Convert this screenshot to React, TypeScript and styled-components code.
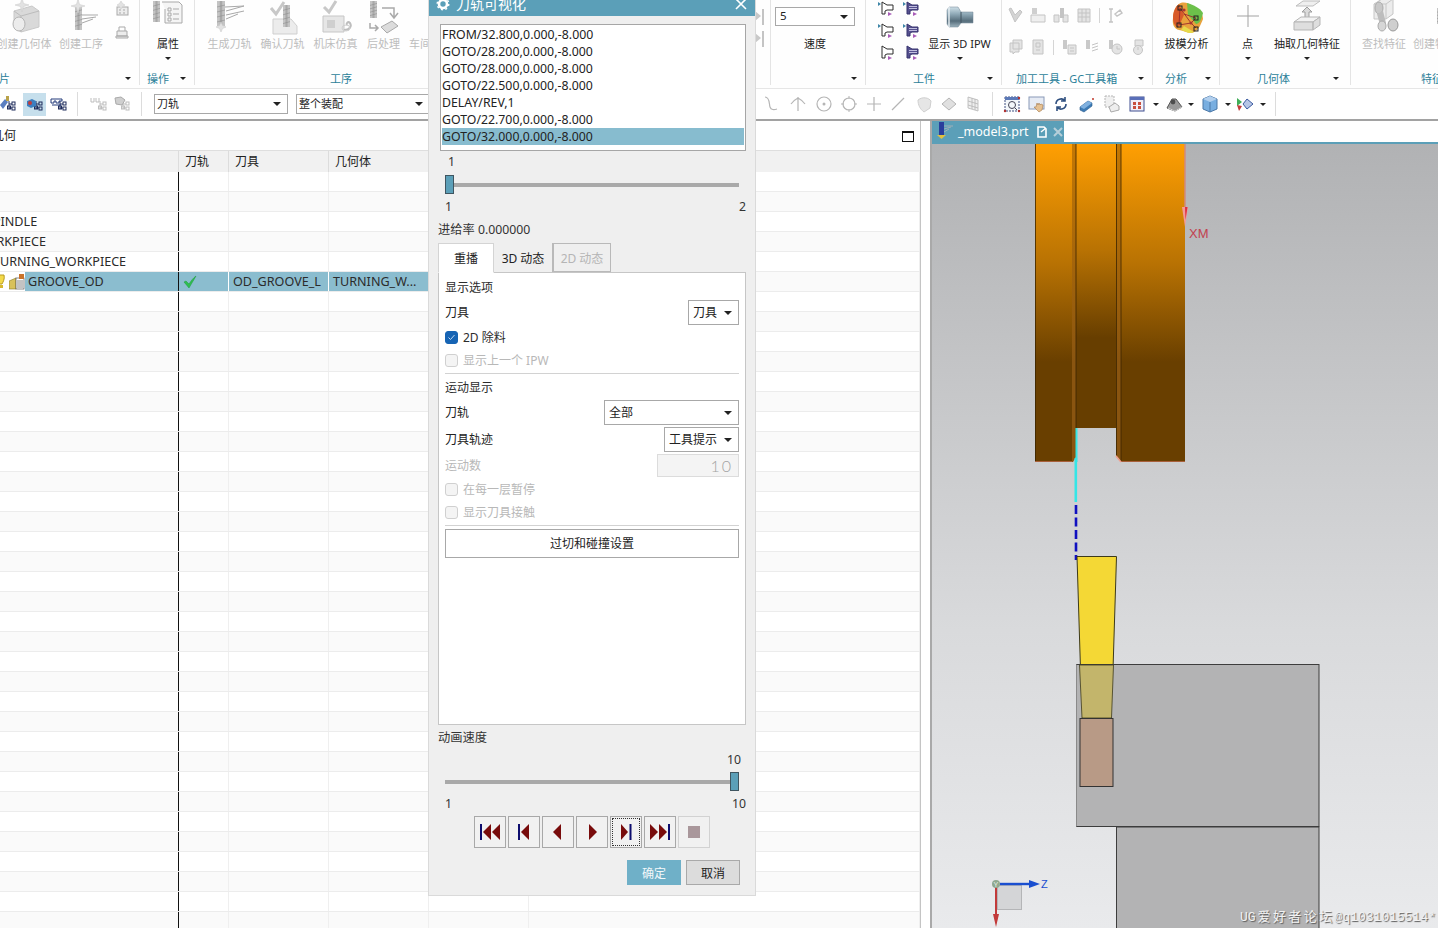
import React from "react";
import styled, { createGlobalStyle } from "styled-components";

const FONT = `"Noto Sans", "Open Sans", "Noto Sans CJK SC", sans-serif`;

const Global = createGlobalStyle`
  html, body { margin: 0; padding: 0; overflow: hidden; background: #fff; }
  * { box-sizing: border-box; }
`;

const Shell = styled.div`
  width: 1438px; height: 928px; position: relative; overflow: hidden;
  display: flex; flex-direction: column; background: #fff;
  font-family: ${FONT}; font-size: 12px; color: #222;
`;

/* ribbon */
const Ribbon = styled.div`
  height: 89px; display: flex; flex: none; background: #fefefe; border-bottom: 1px solid #e6e6e6;
`;
const Group = styled.div<{ $w: number }>`
  width: ${p => p.$w}px; flex: none; height: 85px; display: flex; flex-direction: column;
  border-right: 1px solid #e4e4e4;
`;
const Tools = styled.div<{ $pl?: number }>`
  height: 72px; display: flex; padding-left: ${p => p.$pl ?? 0}px;
`;
const Tool = styled.div<{ $w: number }>`
  width: ${p => p.$w}px; flex: none; display: flex; flex-direction: column; align-items: center;
`;
const Slot = styled.div`
  height: 35px; display: flex; align-items: flex-start; justify-content: center; width: 100%;
`;
const ToolLabel = styled.div<{ $off?: boolean; $bare?: boolean }>`
  height: 18px; line-height: 18px; font-size: 11px; white-space: nowrap;
  margin-top: ${p => (p.$bare ? 35 : 0)}px;
  color: ${p => (p.$off ? "#bdbdbd" : "#222")};
`;
const Caret = styled.span<{ $mt?: number; $ml?: string; $big?: boolean }>`
  display: block; width: 0; height: 0; flex: none;
  border-left: ${p => (p.$big ? 4 : 3)}px solid transparent; border-right: ${p => (p.$big ? 4 : 3)}px solid transparent;
  border-top: ${p => (p.$big ? 4 : 3)}px solid #222;
  margin-top: ${p => p.$mt ?? 0}px; margin-left: ${p => p.$ml ?? "0"};
`;
const Footer = styled.div<{ $pl: number; $pr?: number }>`
  height: 14px; display: flex; align-items: center;
  padding-left: ${p => p.$pl}px; padding-right: ${p => p.$pr ?? 8}px;
  font-size: 11px; color: #2b7f99; white-space: nowrap;
`;
const ClippedLabel = styled.span`
  margin-left: -1px;
`;
const Stack = styled.div<{ $w: number; $gap: number; $pt: number }>`
  width: ${p => p.$w}px; flex: none; display: flex; flex-direction: column; align-items: center;
  gap: ${p => p.$gap}px; padding-top: ${p => p.$pt}px;
`;
const Rows = styled.div<{ $pl: number }>`
  display: flex; flex-direction: column; gap: 16px; padding: 7px 0 0 ${p => p.$pl}px; height: 72px;
`;
const IconRow = styled.div`
  display: flex; align-items: center; gap: 7px; height: 16px;
`;
const VSep = styled.span`
  width: 1px; height: 15px; background: #d5d5d5; flex: none;
`;
const Push = styled.div`
  margin-left: auto;
`;
const Nudge = styled.span<{ $t: number }>`
  display: block; margin-top: ${p => p.$t}px;
`;

/* second toolbar */
const Toolbar = styled.div`
  height: 32px; flex: none; display: flex; align-items: center; border-bottom: 2px solid #a2a2a2; background: #fff;
`;
const TbSection = styled.div<{ $w: number }>`
  width: ${p => p.$w}px; flex: none; display: flex; align-items: center; height: 100%;
`;
const TbBtn = styled.div<{ $w: number; $ml?: number; $active?: boolean }>`
  width: ${p => p.$w}px; height: 23px; flex: none; margin-left: ${p => p.$ml ?? 0}px;
  display: flex; align-items: center; justify-content: center;
  background: ${p => (p.$active ? "#c6dfec" : "transparent")};
`;
const TbSep = styled.span<{ $ml: number }>`
  width: 1px; height: 24px; background: #dcdcdc; flex: none; margin-left: ${p => p.$ml}px;
`;
const Combo = styled.div<{ $w: number; $h?: number; $ml?: number; $mt?: number; $fs?: number; $pl?: number }>`
  width: ${p => p.$w}px; height: ${p => p.$h ?? 25}px; flex: none;
  margin-left: ${p => p.$ml ?? 0}px; margin-top: ${p => p.$mt ?? 0}px;
  border: 1px solid #a8a8a8; background: #fff; display: flex; align-items: center;
  padding: 0 6px 2px ${p => p.$pl ?? 4}px; font-size: ${p => p.$fs ?? 12}px; color: #222;
  justify-content: space-between; white-space: nowrap;
  span { margin-top: 2px; }
`;

/* main */
const Main = styled.div`
  flex: 1; display: flex; min-height: 0;
`;
const Nav = styled.div`
  width: 921px; flex: none; border-right: 1px solid #c4c4c4; display: flex; flex-direction: column; overflow: hidden;
`;
const NavTitle = styled.div`
  height: 29px; flex: none; display: flex; align-items: center; justify-content: space-between;
  padding-right: 6px; font-size: 12px;
`;
const NavTitleText = styled.span`
  margin-left: -8px; margin-top: -2px;
`;
const MaxBtn = styled.div`
  width: 12px; height: 11px; border: 1px solid #111; border-top-width: 2px; margin-top: 1px;
`;
const HeadRow = styled.div`
  height: 22px; flex: none; display: flex; background: #f1f1f1; border-top: 1px solid #dedede;
`;
const HeadCell = styled.div<{ $w: number }>`
  width: ${p => p.$w}px; flex: none; padding-left: 6px; border-right: 1px solid #dcdcdc;
  line-height: 21px; font-size: 12px;
`;
const Row = styled.div<{ $alt: boolean }>`
  height: 20px; flex: none; display: flex; background: ${p => (p.$alt ? "#fafafa" : "#fff")};
  border-bottom: 1px solid #ececec;
`;
const Cell = styled.div<{ $w?: number; $sel?: boolean }>`
  width: ${p => (p.$w ? p.$w + "px" : "auto")}; flex: ${p => (p.$w ? "none" : "1")};
  border-right: 1px solid ${p => (p.$sel ? "#fff" : "#efefef")};
  background: ${p => (p.$sel ? "#8bbdcf" : "transparent")};
  padding-left: 4px; line-height: 19px; font-size: 12.6px; white-space: nowrap; overflow: hidden; color: #2b2b2b;
  display: flex; align-items: center;
`;
const NameCell = styled.div`
  width: 179px; flex: none; border-right: 1px solid #111; display: flex; align-items: center;
  white-space: nowrap; overflow: hidden; line-height: 19px; font-size: 12.6px; color: #2b2b2b;
`;
const NameText = styled.span<{ $off: number }>`
  margin-left: ${p => p.$off}px;
`;
const SelLead = styled.div`
  width: 25px; height: 100%; flex: none; background: #fff; display: flex; align-items: center; gap: 1px;
`;
const SelName = styled.div`
  flex: 1; height: 100%; background: #8bbdcf; padding-left: 3px;
`;

const Gutter = styled.div`
  width: 9px; flex: none; background: #fff;
`;
const View = styled.div`
  flex: 1; min-width: 0; display: flex; flex-direction: column; position: relative; border-left: 2px solid #a9a9a9;
`;
const TabStrip = styled.div`
  height: 23px; flex: none; background: #fff; border-bottom: 2px solid #5b9fb8; display: flex;
`;
const FileTab = styled.div`
  width: 132px; height: 21px; background: #5b9fb8; color: #fff; display: flex; align-items: center;
  padding-left: 3px; font-size: 12.5px;
`;
const FileName = styled.span`
  margin: 0 7px 0 4px;
`;
const FileClose = styled.span`
  margin-left: 5px; display: block;
`;
const Scene = styled.svg`
  display: block; flex: 1; width: 100%; min-height: 0;
  background: linear-gradient(#b1b2b4 0%, #c8c9cb 35%, #d9dadc 62%, #e9eaec 100%);
`;
const Watermark = styled.div`
  position: absolute; right: 2px; bottom: 3px; color: #f2f2f2; font-family: "Liberation Mono", "Noto Sans CJK SC", monospace;
  font-size: 13px; text-shadow: 1px 1px 1px #5a5a5a; white-space: nowrap;
`;
const WaterCjk = styled.span`
  letter-spacing: 2.4px; margin-left: 2px;
`;

/* dialog */
const Dialog = styled.div`
  position: absolute; left: 428px; top: -8px; width: 328px; height: 904px; background: #efefef;
  border: 1px solid #dadada; border-top: 0; display: flex; flex-direction: column;
`;
const DTitle = styled.div`
  height: 24px; flex: none; background: #5b9fb8; color: #fff; display: flex; align-items: center;
  padding: 0 8px 0 7px; gap: 6px; font-size: 14px;
`;
const DTitleText = styled.span`
  flex: 1; margin-top: -2px;
`;
const DBody = styled.div`
  flex: 1; padding: 8px 9px 0 9px; display: flex; flex-direction: column;
`;
const ListBox = styled.div`
  margin-left: 2px; width: 306px; height: 127px; flex: none; background: #fff; border: 1px solid #a6a6a6;
  padding: 1px; font-size: 12.3px;
`;
const ListItem = styled.div<{ $sel?: boolean }>`
  height: 17px; line-height: 17px; background: ${p => (p.$sel ? "#87bccf" : "transparent")}; color: #222;
`;
const Num = styled.div<{ $mt: number; $ml?: number; $w?: number; $right?: boolean }>`
  height: 14px; line-height: 14px; font-size: 12.25px; flex: none; color: #333;
  margin-top: ${p => p.$mt}px; margin-left: ${p => p.$ml ?? 0}px;
  ${p => (p.$w ? `width: ${p.$w}px;` : "")}
  ${p => (p.$right ? "text-align: right;" : "")}
`;
const Slider = styled.div<{ $mt: number }>`
  position: relative; margin: ${p => p.$mt}px 0 0 7px; width: 294px; height: 20px; flex: none; display: flex; align-items: center;
`;
const Track = styled.div`
  width: 100%; height: 4px; background: #a9a9a9;
`;
const Thumb = styled.div<{ $end?: boolean }>`
  position: absolute; top: 0; ${p => (p.$end ? "right: 0;" : "left: 0;")} width: 9px; height: 19px;
  background: #5b9fb8; border: 1px solid #3f5560;
`;
const EndRow = styled.div<{ $mt: number }>`
  margin: ${p => p.$mt}px 0 0 7px; width: 301px; height: 14px; line-height: 14px; display: flex; justify-content: space-between; flex: none; color: #333; font-size: 12.25px;
`;
const Tabs = styled.div`
  margin-top: 6px; height: 30px; display: flex; flex: none; position: relative; z-index: 1; margin-bottom: -1px;
`;
const Tab = styled.div<{ $w: number; $on?: boolean; $off?: boolean }>`
  width: ${p => p.$w}px; display: flex; align-items: center; justify-content: center; font-size: 12px;
  height: ${p => (p.$on ? 30 : 29)}px;
  background: ${p => (p.$on ? "#fff" : "#efefef")};
  color: ${p => (p.$off ? "#b5b5b5" : "#222")};
  border: 1px solid ${p => (p.$on ? "#d4d4d4" : p.$off ? "#b9b9b9" : "transparent")};
  ${p => (p.$on ? "border-bottom-color: #fff;" : "")}
  ${p => (p.$off ? "border-width: 1px 1px 1px 2px;" : "")}
`;
const Panel = styled.div`
  height: 453px; flex: none; width: 308px; background: #fff; border: 1px solid #c6c6c6;
  padding: 6px 6px 0 6px; display: flex; flex-direction: column;
`;
const Sect = styled.div<{ $mt?: number }>`
  height: 18px; line-height: 18px; font-size: 12px; flex: none; color: #2c2c2c; margin-top: ${p => p.$mt ?? 0}px;
`;
const FieldRow = styled.div<{ $mt: number }>`
  display: flex; justify-content: space-between; align-items: center; flex: none; margin-top: ${p => p.$mt}px; font-size: 12px;
`;
const FieldLabel = styled.span<{ $off?: boolean }>`
  color: ${p => (p.$off ? "#b8b8b8" : "#222")}; margin-top: -2px;
`;
const CountBox = styled.div`
  width: 82px; height: 23px; border: 1px solid #dcdcdc; background: #f4f4f4; color: #a3a3a3; text-align: right;
  padding-right: 5px; font-family: Lato, "Liberation Sans", sans-serif; font-weight: 300; font-size: 16px; line-height: 22px; letter-spacing: 2px;
`;
const CheckRow = styled.div<{ $mt: number; $off?: boolean }>`
  height: 18px; display: flex; align-items: center; gap: 5px; flex: none; margin-top: ${p => p.$mt}px;
  color: ${p => (p.$off ? "#b8b8b8" : "#2c2c2c")}; font-size: 12px;
`;
const Check = styled.span<{ $on?: boolean }>`
  width: 13px; height: 13px; border-radius: 3px; flex: none; display: flex; align-items: center; justify-content: center;
  background: ${p => (p.$on ? "#1664b4" : "#f4f4f4")}; border: 1px solid ${p => (p.$on ? "#1664b4" : "#d0d0d0")};
`;
const Hr = styled.div<{ $mt: number }>`
  height: 1px; background: #d2d2d2; flex: none; margin-top: ${p => p.$mt}px;
`;
const WideBtn = styled.div`
  height: 29px; margin-top: 3px; border: 1px solid #a8a8a8; display: flex; align-items: center; justify-content: center;
  font-size: 12px; flex: none; background: #fff; color: #222; padding-bottom: 2px;
`;
const Transport = styled.div`
  margin: 5px 0 0 36px; display: flex; gap: 2px; flex: none;
`;
const TBtn = styled.div<{ $off?: boolean; $focus?: boolean }>`
  width: 32px; height: 32px; border: 1px solid ${p => (p.$off ? "#d2d2d2" : "#a8a8a8")}; background: #f1f1f1;
  display: flex; align-items: center; justify-content: center;
  ${p => (p.$focus ? "outline: 1px dotted #333; outline-offset: -3px;" : "")}
`;
const DFooter = styled.div`
  margin: 12px 0 0 189px; display: flex; gap: 5px; flex: none;
`;
const DBtn = styled.div<{ $primary?: boolean }>`
  width: 54px; height: 25px; display: flex; align-items: center; justify-content: center; font-size: 12px;
  background: ${p => (p.$primary ? "#6fb0c8" : "#dcdcdc")}; color: ${p => (p.$primary ? "#f3f8fa" : "#222")};
  border: 1px solid ${p => (p.$primary ? "#6fb0c8" : "#a9a9a9")};
`;

/* ---------- icons ---------- */
const G = { a: "#d9d9d9", b: "#c4c4c4", c: "#a9a9a9", d: "#ececec", e: "#8f8f8f" };
const Ico: React.FC<{ s?: number; h?: number; vb?: string; children: React.ReactNode }> = ({ s = 36, h, vb, children }) => (
  <svg width={s} height={h ?? s} viewBox={vb ?? `0 0 ${s} ${h ?? s}`} style={{ display: "block", flex: "none" }}>{children}</svg>
);
const Burst = ({ x, y, r = 6 }: { x: number; y: number; r?: number }) => (
  <path d={`M${x} ${y - r}L${x + 1.5} ${y - 1.5}L${x + r} ${y}L${x + 1.5} ${y + 1.5}L${x} ${y + r}L${x - 1.5} ${y + 1.5}L${x - r} ${y}L${x - 1.5} ${y - 1.5}Z`} fill="#e2e2e2" stroke="#cfcfcf" strokeWidth=".6" />
);
const Mill = ({ x, y, w = 8, h = 26 }: { x: number; y: number; w?: number; h?: number }) => (
  <g>
    <rect x={x} y={y} width={w} height={h} fill={G.b} />
    <rect x={x + w * 0.35} y={y} width={w * 0.3} height={h} fill={G.c} />
    {[0.2, 0.4, 0.6, 0.8].map(t => <line key={t} x1={x} x2={x + w} y1={y + h * t + 1} y2={y + h * t - 1} stroke={G.e} strokeWidth=".6" />)}
  </g>
);
const CreateGeom = () => (
  <Ico>
    <path d="M8 11L26 6L33 11V27L15 32L8 27Z" fill={G.a} stroke="#c9c9c9" />
    <path d="M8 11L15 16L33 11M15 16V32" fill="none" stroke="#bcbcbc" />
    <ellipse cx="13" cy="24" rx="6" ry="7" fill={G.d} stroke="#b4b4b4" />
    <Burst x={16} y={5} r={7} />
  </Ico>
);
const CreateOp = () => (
  <Ico>
    <Mill x={12} y={6} w={7} h={24} />
    <path d="M19 15H35M19 19L33 17M19 23L30 19" stroke={G.c} fill="none" strokeWidth="1" />
    <Burst x={15} y={6} r={7} />
  </Ico>
);
const SmallA = () => (
  <Ico s={16}>
    <rect x="3" y="6" width="11" height="8" fill={G.d} stroke={G.c} />
    <path d="M5 9h2M9 9h2M5 12h2M9 12h2" stroke={G.c} />
    <Burst x={7} y={4} r={4} />
  </Ico>
);
const SmallB = () => (
  <Ico s={16}>
    <path d="M2 13h12v2H2zM3 8h10v5H3z" fill={G.d} stroke={G.c} />
    <path d="M5 8V4h6v4" fill="none" stroke={G.c} />
  </Ico>
);
const Props = () => (
  <Ico s={32} h={24} vb="0 0 32 24">
    <Mill x={1} y={1} w={7} h={21} />
    <path d="M10 2h17l3 3v18H13V9" fill="#f5f5f5" stroke={G.c} />
    <path d="M16 8h3v3h-3zM16 13h3v3h-3zM16 18h3v3h-3zM21 9h6M21 14h6M21 19h6" fill="none" stroke={G.c} />
  </Ico>
);
const GenPath = () => (
  <Ico>
    <Mill x={5} y={1} w={8} h={25} />
    <path d="M13 7L32 6L14 11M32 11L14 15M14 19L26 14" stroke={G.c} fill="none" />
    <Burst x={9} y={27} r={5} />
  </Ico>
);
const Verify = () => (
  <Ico>
    <path d="M8 19L26 19L32 26V34H8Z" fill={G.d} stroke="#cfcfcf" />
    <Mill x={18} y={5} w={7} h={22} />
    <path d="M6 8L11 14L19 2" fill="none" stroke="#c8c8c8" strokeWidth="3" />
  </Ico>
);
const Machine = () => (
  <Ico>
    <path d="M5 16H26V32H5Z" fill="#e6e6e6" stroke="#c6c6c6" />
    <rect x="9" y="20" width="8" height="8" fill="#cfcfcf" />
    <path d="M26 30C32 30 34 26 32 23C30 21 28 23 29 25" fill="none" stroke="#bdbdbd" strokeWidth="2" />
    <path d="M6 7L11 12L18 1" fill="none" stroke="#c8c8c8" strokeWidth="3" />
    <path d="M24 28a4 3 0 1 0 8 0a4 3 0 1 0 -8 0" fill="none" stroke="#cfcfcf" />
  </Ico>
);
const Post = () => (
  <Ico>
    <Mill x={4} y={1} w={7} h={17} />
    <path d="M16 8h12v9M24 13l4 5l4-5" fill="none" stroke={G.c} strokeWidth="1.5" />
    <path d="M4 23v5h8M9 25l3 3l-3 3" fill="none" stroke={G.c} strokeWidth="1.5" />
    <path d="M15 27l11-6l6 5l-11 7z" fill="#dcdcdc" stroke={G.c} />
  </Ico>
);
const StripIcon = () => (
  <Ico s={16} h={18} vb="0 0 16 18">
    <path d="M3 3l6 5l-6 5z" fill="#c9c9c9" />
    <path d="M11 1v16" stroke="#c4c4c4" strokeWidth="2" />
  </Ico>
);
const Tip = ({ tone, flag = true }: { tone: "w" | "v"; flag?: boolean }) => (
  <Ico s={17} h={16} vb="0 0 17 16">
    {flag && <path d="M0 2l3 2l-3 2z" fill="#3f86a8" />}
    <path d="M4 2L9 5H15V10H9L7 11V14H4Z" fill={tone === "w" ? "#fff" : "#55508e"} stroke={tone === "w" ? "#2d2d2d" : "#37336e"} />
    {tone === "v" && <path d="M6 6.5h8M6 8.5h8" stroke="#dcd9f2" strokeWidth=".8" />}
    <path d="M10 12v4l4-2z" fill="#a95cb8" />
  </Ico>
);
const Ipw = () => (
  <Ico s={28} h={22} vb="0 0 28 22">
    <defs>
      <linearGradient id="ipwg" x1="0" y1="0" x2="0" y2="1">
        <stop offset="0" stopColor="#cfe0e8" /><stop offset=".35" stopColor="#8fa9b7" /><stop offset=".7" stopColor="#566d7b" /><stop offset="1" stopColor="#9db3be" />
      </linearGradient>
    </defs>
    <path d="M3 1h9l3 5h12v11H15l-3 4H3l-2-3V4z" fill="url(#ipwg)" stroke="#6c8290" strokeWidth=".5" />
    <path d="M3 1v20" stroke="#e8f0f4" strokeWidth="2" opacity=".7" />
    <path d="M15 6v11" stroke="#41535f" strokeWidth="1" />
  </Ico>
);
const Draft = () => (
  <Ico s={34} h={40} vb="0 0 34 40">
    <path d="M9 4C13 1 19 3 22 6C28 9 33 13 33 19C31 24 29 30 24 32C20 35 13 30 9 30C4 29 2 24 3 18C3 12 5 7 9 4Z" fill="#e8a23c" />
    <path d="M17 3C24 5 30 8 33 13C31 22 28 24 26 24L18 15Z" fill="#6cc04a" />
    <path d="M3 18C3 12 5 7 9 4L14 15L8 28C5 26 3 23 3 18Z" fill="#d85a2a" />
    <path d="M14 26L24 32C20 35 15 31 11 30Z" fill="#e6da4a" />
    <path d="M10 8L9 25L21 23M10 8L21 23M14 14L26 18M21 23L26 28M21 23L26 18" stroke="#9c2b2b" strokeWidth=".9" fill="none" />
    {[[10, 8], [9, 25], [26, 18], [26, 29]].map(([x, y]) => (
      <rect key={`${x}${y}`} x={x - 2} y={y - 2} width="4" height="4" fill="none" stroke="#222" strokeWidth="1" />
    ))}
    <circle cx="14" cy="10" r="1.6" fill="#a33" />
    <circle cx="21" cy="23" r="1.6" fill="#a33" />
  </Ico>
);
const Plus = () => (
  <Ico s={24}>
    <path d="M12 1V23M1 12H23" stroke="#a2a2a2" strokeWidth="1" />
  </Ico>
);
const Extract = () => (
  <Ico s={28} h={35} vb="0 0 28 35">
    <path d="M3 6L10 1H27L20 6Z" fill="#efefef" stroke="#bdbdbd" />
    <path d="M12 17V12H9l5-5l5 5h-3v5" fill="#dadada" stroke="#9d9d9d" />
    <path d="M1 22L8 17H27L20 22Z" fill="#f2f2f2" stroke="#b5b5b5" />
    <path d="M1 22H20V30H1ZM20 22L27 17V25L20 30Z" fill="#dedede" stroke="#b5b5b5" />
  </Ico>
);
const FindFeat = () => (
  <Ico s={36}>
    <path d="M8 4L16 -1H27V14L20 19H8Z" fill="#ececec" stroke="#c6c6c6" />
    <path d="M8 4H20V19M20 4L27 -1" fill="none" stroke="#c6c6c6" />
    <ellipse cx="13" cy="8" rx="4" ry="6" fill="#c8c8c8" stroke="#aaa" />
    <path d="M11 14L14 25L20 23L17 11Z" fill="#bdbdbd" />
    <ellipse cx="27" cy="25" rx="5" ry="6" fill="#cfcfcf" stroke="#999" />
    <ellipse cx="16" cy="26" rx="4" ry="5" fill="#d6d6d6" stroke="#aaa" />
  </Ico>
);
const CutFeat = () => (
  <Ico s={24}>
    <Mill x={14} y={8} w={8} h={16} />
    <path d="M22 8h4v16h-4z" fill="#e4e4e4" />
  </Ico>
);
const SmGray = ({ k }: { k: number }) => {
  const s = "#c4c4c4";
  const f = "#e4e4e4";
  const shapes: React.ReactNode[] = [
    <path d="M2 2l2-1l4 7l5-5l2 2l-7 10z" fill="#d4d4d4" stroke={s} />,
    <><rect x="2" y="1" width="5" height="6" fill="#cfcfcf" /><path d="M1 8h14v7H1z" fill="#efefef" stroke={s} /></>,
    <><path d="M1 8h5v7H1zM10 8h5v7h-5z" fill={f} stroke={s} /><rect x="7" y="1" width="4" height="10" fill="#c4c4c4" /></>,
    <path d="M2 2h12v13H2zM2 6h12M2 10h12M6 2v13M10 2v13" fill={f} stroke={s} />,
    <path d="M4 2v13M2 2h4M2 15h4M8 7l5-4l2 3l-5 3z" fill="none" stroke={s} strokeWidth="1.4" />,
    <path d="M6 1h9v9H6zM3 4h9v9H8l-2 2v-2H3z" fill={f} stroke={s} />,
    <path d="M3 1h10v14H3zM6 4h4v4H6zM6 11h4" fill={f} stroke={s} />,
    <><rect x="2" y="1" width="4" height="9" fill="#c9c9c9" /><path d="M7 6h8v9H7zM9 9h4M9 12h4" fill={f} stroke={s} /></>,
    <><rect x="2" y="1" width="4" height="9" fill="#c9c9c9" /><path d="M8 6l6-2M8 9l6-2M8 12l6-2" stroke={s} /></>,
    <><rect x="2" y="1" width="4" height="9" fill="#c9c9c9" /><circle cx="10" cy="10" r="5" fill={f} stroke={s} /><path d="M10 7v3h3" fill="none" stroke={s} /></>,
    <><path d="M5 1h8v6H5z" fill={f} stroke={s} /><circle cx="8" cy="11" r="4.5" fill={f} stroke={s} /><path d="M8 8v3" stroke={s} /></>,
  ];
  return <Ico s={16}>{shapes[k]}</Ico>;
};
const TreeIco = ({ kind }: { kind: "mach" | "geo" | "tool" | "p1" | "p2" }) => {
  const wire = kind === "p1" || kind === "p2" ? "#bdbdbd" : "#1d2a5a";
  return (
    <Ico s={18}>
      <path d="M10 6v8M10 9h3M10 13h3" stroke={wire} fill="none" />
      <rect x="8.5" y="11" width="3" height="3" fill="none" stroke={wire} />
      <rect x="13" y="7" width="3" height="3" fill="none" stroke={wire} />
      <rect x="13" y="12" width="3" height="3" fill="none" stroke={wire} />
      {kind === "mach" && <path d="M1 10l5-6l3 3l-5 7z" fill="#5b7fc0" />}
      {kind === "mach" && <rect x="7" y="1" width="3" height="5" fill="#b9a24a" />}
      {kind === "geo" && <><path d="M1 6l5-2l4 2v5l-5 2l-4-2z" fill="#3c7fc0" /><circle cx="4" cy="8" r="2" fill="#c03c3c" /></>}
      {kind === "tool" && <path d="M1 4h11M1 4v4h3V6h2v2h3V6h3V4M2 10h9" stroke="#223a7a" fill="none" />}
      {kind === "p1" && <path d="M1 3v4h3V3M6 3v4h3V3" stroke="#bdbdbd" fill="none" />}
      {kind === "p2" && <path d="M2 3l6-1l4 3l-3 5l-6-1z" fill="#cfcfcf" stroke="#aaa" />}
    </Ico>
  );
};
const Curve = ({ k }: { k: number }) => {
  const c = "#b5b5b5";
  const d = [
    <path d="M3 2C8 2 7 9 8 12C9 15 12 15 15 14" fill="none" stroke={c} strokeWidth="1.2" />,
    <path d="M9 2V16M2 9C5 5 7 4 9 3C11 4 13 5 16 9" fill="none" stroke={c} strokeWidth="1.2" />,
    <><circle cx="9" cy="9" r="7" fill="none" stroke={c} strokeWidth="1.2" /><circle cx="9" cy="9" r="1.5" fill={c} /></>,
    <><circle cx="9" cy="9" r="6" fill="none" stroke={c} strokeWidth="1.2" /><path d="M9 1v3M9 14v3M1 9h3M14 9h3" stroke={c} /></>,
    <path d="M9 2V16M2 9H16" stroke={c} strokeWidth="1.2" />,
    <path d="M3 15L15 3" stroke={c} strokeWidth="1.2" />,
    <path d="M3 5C8 1 14 3 16 6L15 13L9 17C5 14 3 10 3 5Z" fill="#e6e6e6" stroke="#cfcfcf" />,
    <path d="M2 9L9 3L16 9L9 15Z" fill="#e0e0e0" stroke={c} />,
    <path d="M4 2L14 5V16L4 13ZM4 6L14 9M4 10L14 13M8 3V14M11 4V15" fill="#eee" stroke={c} strokeWidth=".8" />,
  ];
  return <Ico s={18}>{d[k]}</Ico>;
};
const ViewIco = ({ k }: { k: number }) => {
  const d = [
    <><rect x="2" y="2" width="14" height="14" fill="#f4f8fb" stroke="#3f4f80" strokeDasharray="2 1" /><rect x="2" y="2" width="14" height="3" fill="#5b79b8" /><circle cx="9" cy="10" r="3.5" fill="none" stroke="#445" /><path d="M12 13l2 2" stroke="#445" /><circle cx="2" cy="16" r="1.2" fill="#b03030" /><circle cx="16" cy="16" r="1.2" fill="#b03030" /><circle cx="16" cy="3" r="1.2" fill="#b03030" /></>,
    <><rect x="1" y="2" width="15" height="12" fill="#e6ebf4" stroke="#8a9ab8" /><path d="M9 8l1 2l1-2l1 2l1-1l2 1l-1 5l-3 2l-3-3l-2-2l2 0z" fill="#e6c192" stroke="#a5784a" strokeWidth=".6" /></>,
    <path d="M4 9a5 5 0 0 1 9-3M14 9a5 5 0 0 1-9 3M13 2v4h-4M5 16v-4h4" fill="none" stroke="#2f4f7f" strokeWidth="1.6" />,
    <><path d="M2 12l8-6l4 2v3l-8 6l-4-2z" fill="#3d7bb5" stroke="#285a8c" strokeWidth=".6" /><path d="M10 6l4 2l-8 6l-4-2z" fill="#7fb0df" /><circle cx="15" cy="4" r="1" fill="#c0392b" /></>,
    <><rect x="3" y="1" width="9" height="11" fill="#f0f0f0" stroke="#b5b5b5" strokeDasharray="2 1" /><path d="M7 12l6-4l4 3v4l-8 2z" fill="#eee" stroke="#aaa" /></>,
    <><rect x="2" y="2" width="14" height="14" fill="#f2f0f8" stroke="#3f4f90" /><rect x="2" y="2" width="14" height="3" fill="#5a6fb8" /><path d="M5 7h3v3H5zM10 7h3v3h-3zM5 11h3v3H5zM10 11h3v3h-3z" fill="#c85040" /></>,
    <><path d="M2 13l5-9h4l6 8l-7 4z" fill="#9a9a9a" stroke="#555" /><circle cx="8" cy="7" r="2.4" fill="#4e4e4e" /><path d="M3 13l7 3l7-4" stroke="#d8d8d8" fill="none" /></>,
    <><path d="M9 1l7 3v10l-7 3l-7-3V4z" fill="#78aee0" stroke="#4b78a8" /><path d="M2 4l7 3l7-3L9 1z" fill="#b3d0ee" /><path d="M9 7v10" fill="none" stroke="#4b78a8" /></>,
    <><path d="M1 3l5 4l-5 4z" fill="#3fae58" /><path d="M1 10l5 1l-3 5z" fill="#c23a3a" /><path d="M11 4l6 5l-6 5l-4-5z" fill="#b7c6e6" stroke="#3a5aa0" /></>,
  ];
  return <Ico s={18}>{d[k]}</Ico>;
};
const ModelTab = () => (
  <Ico s={19}>
    <rect x="4" y="0" width="5" height="13" fill="#2a3f9c" />
    <path d="M9 4h9M9 7l7-2M9 10l5-3" stroke="#9fb0b8" />
    <path d="M2 13l4.5 4l4.5-4z" fill="#e0c040" />
  </Ico>
);
const PageIco = () => (
  <Ico s={12}>
    <path d="M2 1h6l2 2v8H2z" fill="none" stroke="#fff" strokeWidth="1.6" />
    <path d="M5 6l5-4" stroke="#fff" strokeWidth="1.4" />
  </Ico>
);
const TabX = () => (
  <Ico s={10}>
    <path d="M1 1l8 8M9 1l-8 8" stroke="#b6cfd9" strokeWidth="2" />
  </Ico>
);
const Gear = () => (
  <Ico s={14}>
    <circle cx="7" cy="7" r="4" fill="none" stroke="#fff" strokeWidth="2.6" />
    <circle cx="7" cy="7" r="5.8" fill="none" stroke="#fff" strokeWidth="1.4" strokeDasharray="2 2.5" />
  </Ico>
);
const CloseX = () => (
  <Ico s={12}>
    <path d="M1 1l10 10M11 1l-10 10" stroke="#fff" strokeWidth="1.6" />
  </Ico>
);
const CheckMark = () => (
  <Ico s={9}>
    <path d="M1.5 4.5l2 2l4-4.5" stroke="#bcd9f5" fill="none" strokeWidth="1" />
  </Ico>
);
const GreenCheck = () => (
  <Ico s={14}>
    <path d="M1 7l2-1l3 3C8 6 10 3 13 1C11 5 8 9 6 13Z" fill="#2fbf4f" stroke="#1d9a3a" strokeWidth=".5" />
  </Ico>
);
const Bulb = () => (
  <Ico s={8} h={16} vb="0 0 8 16">
    <path d="M-4 1h8c1 4-1 7-2 9H-2z" fill="#f3d94a" stroke="#b79a1e" />
    <rect x="-2" y="11" width="5" height="3" fill="#d8b72e" />
  </Ico>
);
const OpFolder = () => (
  <Ico s={16}>
    <path d="M0 7l7-3v11H0z" fill="#d8c15a" stroke="#8a7a26" strokeWidth=".6" />
    <rect x="7" y="4" width="8" height="11" fill="#fff" stroke="#555" strokeWidth=".7" />
    <path d="M8 7h6M8 9h6M8 11h6M8 13h6" stroke="#555" strokeWidth=".7" />
    <rect x="10" y="0" width="5" height="5" fill="#c9732a" />
  </Ico>
);
const R = "#780b0b";
const B = "#0d0d6e";
const Media = ({ k }: { k: number }) => {
  const d = [
    <><rect x="0" y="1" width="2" height="16" fill={B} /><path d="M11 1v16L3 9z" fill={R} /><path d="M20 1v16L12 9z" fill={R} /></>,
    <><rect x="4" y="1" width="2" height="16" fill={B} /><path d="M15 1v16L7 9z" fill={R} /></>,
    <path d="M13 1v16L5 9z" fill={R} />,
    <path d="M7 1v16l8-8z" fill={R} />,
    <><path d="M5 1v16l7-8z" fill={R} /><rect x="13.5" y="1" width="2" height="16" fill={B} /></>,
    <><path d="M0 1v16l8-8z" fill={R} /><path d="M9 1v16l8-8z" fill={R} /><rect x="18" y="1" width="2" height="16" fill={B} /></>,
    <rect x="4" y="3" width="12" height="12" fill="#a9979b" />,
  ];
  return <Ico s={20} h={18} vb="0 0 20 18">{d[k]}</Ico>;
};

/* ---------- data ---------- */
const gcode = [
  "FROM/32.800,0.000,-8.000", "GOTO/28.200,0.000,-8.000", "GOTO/28.000,0.000,-8.000", "GOTO/22.500,0.000,-8.000",
  "DELAY/REV,1", "GOTO/22.700,0.000,-8.000", "GOTO/32.000,0.000,-8.000",
];
const names: Record<number, [string, number]> = {
  2: ["SPINDLE", -14], 3: ["WORKPIECE", -25], 4: ["TURNING_WORKPIECE", -7],
};
const cols = [50, 100, 100, 100];

const Tree = () => (
  <>
    <HeadRow>
      <HeadCell $w={179} />
      <HeadCell $w={50}>刀轨</HeadCell>
      <HeadCell $w={100}>刀具</HeadCell>
      <HeadCell $w={100}>几何体</HeadCell>
      <HeadCell $w={100} />
    </HeadRow>
    {Array.from({ length: 38 }, (_, i) => {
      const sel = i === 5;
      return (
        <Row key={i} $alt={i % 2 === 1}>
          <NameCell>
            {sel ? (
              <>
                <SelLead><Bulb /><OpFolder /></SelLead>
                <SelName>GROOVE_OD</SelName>
              </>
            ) : names[i] ? <NameText $off={names[i][1]}>{names[i][0]}</NameText> : null}
          </NameCell>
          {cols.map((w, c) => (
            <Cell key={c} $w={w} $sel={sel && c < 3}>
              {sel && c === 0 && <GreenCheck />}
              {sel && c === 1 && "OD_GROOVE_L"}
              {sel && c === 2 && "TURNING_W..."}
            </Cell>
          ))}
          <Cell />
        </Row>
      );
    })}
  </>
);

const Stage = () => (
  <Scene viewBox="932 144 506 784" preserveAspectRatio="xMinYMin slice">
    <defs>
      <linearGradient id="o1" x1="0" y1="144" x2="0" y2="362" gradientUnits="userSpaceOnUse">
        <stop offset="0" stopColor="#ff9f02" /><stop offset=".55" stopColor="#b87203" /><stop offset="1" stopColor="#693f00" />
      </linearGradient>
      <linearGradient id="o2" x1="0" y1="144" x2="0" y2="338" gradientUnits="userSpaceOnUse">
        <stop offset="0" stopColor="#ff9f02" /><stop offset=".55" stopColor="#b87203" /><stop offset="1" stopColor="#673e00" />
      </linearGradient>
      <linearGradient id="o3" x1="0" y1="144" x2="0" y2="362" gradientUnits="userSpaceOnUse">
        <stop offset="0" stopColor="#c47804" /><stop offset="1" stopColor="#8a5510" />
      </linearGradient>
    </defs>
    <path d="M1035 144H1072V462H1035Z" fill="url(#o1)" />
    <path d="M1072 144H1076V457L1073 462H1072Z" fill="url(#o3)" />
    <path d="M1076 144H1116V428H1076Z" fill="url(#o2)" />
    <path d="M1116 144H1121V462L1116 456Z" fill="url(#o3)" />
    <path d="M1121 144H1185V462H1121Z" fill="url(#o1)" />
    <path d="M1035.5 144V461M1076 144V428M1116.5 144V455M1121 144V461" stroke="#3a2400" strokeWidth=".8" fill="none" />
    <path d="M1035 461.5H1072" stroke="#a8603a" strokeWidth="1" />
    <path d="M1121 461.5H1185" stroke="#a8603a" strokeWidth="1" />
    <path d="M1116 456L1121 462" stroke="#f0a090" strokeWidth="1.5" />
    <path d="M1185 144V207" stroke="#d08a80" strokeWidth="1.5" />
    <path d="M1182 207L1188 207L1185 227Z" fill="#f29a9a" />
    <path d="M1185 207L1187.5 207L1185.5 220Z" fill="#e03040" />
    <text x="1189" y="238" fontSize="13" fill="#c2424f" fontFamily="Liberation Sans, sans-serif">XM</text>
    <path d="M1076.5 428V462" stroke="#35e6e6" strokeWidth="2" />
    <path d="M1075.8 458V502" stroke="#35e6e6" strokeWidth="2.6" />
    <path d="M1076 505V560" stroke="#1010c0" strokeWidth="2.6" strokeDasharray="9 3.5" />
    <path d="M1077 556.5H1116.5L1111.5 718H1082Z" fill="#f4d835" stroke="#3d3a1a" strokeWidth="1" />
    <rect x="1076.5" y="664.5" width="242.5" height="162" fill="#b3b3b4" stroke="#3d3d3d" strokeWidth="1" />
    <path d="M1079.5 665H1113.5L1111.5 718H1082Z" fill="#c3b56b" stroke="#3d3a1a" strokeWidth=".8" />
    <rect x="1080" y="718.5" width="33" height="68" fill="#b89a86" stroke="#333" strokeWidth="1" />
    <rect x="1116.5" y="827" width="202.5" height="110" fill="#b3b3b4" stroke="#3d3d3d" strokeWidth="1" />
    <path d="M1076.5 664.5V826.5" stroke="#8a8a8a" strokeWidth="1" />
    <rect x="997.5" y="885.5" width="24" height="24" fill="#d4d5d7" stroke="#b4b5b7" />
    <path d="M996 884V917" stroke="#c23a3a" strokeWidth="2" />
    <path d="M993 914L996 927L999 914Z" fill="#c23a3a" />
    <path d="M1000 884H1030" stroke="#1a4fd0" strokeWidth="2.4" />
    <path d="M1029 880L1040 884L1029 888Z" fill="#1a4fd0" />
    <circle cx="996" cy="884" r="4" fill="#8fa88f" />
    <text x="993.5" y="887" fontSize="7" fill="#e8f0e8" fontFamily="Liberation Sans, sans-serif">Y</text>
    <text x="1041" y="888" fontSize="11" fill="#1a4fd0" fontFamily="Liberation Sans, sans-serif">Z</text>
  </Scene>
);

export default function App() {
  return (
    <Shell>
      <Global />
      <Ribbon>
        <Group $w={140}>
          <Tools>
            <Tool $w={48}><Slot><CreateGeom /></Slot><ToolLabel $off>创建几何体</ToolLabel></Tool>
            <Tool $w={66}><Slot><CreateOp /></Slot><ToolLabel $off>创建工序</ToolLabel></Tool>
            <Stack $w={16} $gap={6} $pt={1}><SmallA /><SmallB /></Stack>
          </Tools>
          <Footer $pl={0}><ClippedLabel>片</ClippedLabel><Caret $ml="auto" /></Footer>
        </Group>
        <Group $w={55}>
          <Tools $pl={1}>
            <Tool $w={54}><Slot><Props /></Slot><ToolLabel>属性</ToolLabel><Caret $mt={4} /></Tool>
          </Tools>
          <Footer $pl={7}>操作<Caret $ml="auto" /></Footer>
        </Group>
        <Group $w={576}>
          <Tools $pl={8}>
            <Tool $w={53}><Slot><GenPath /></Slot><ToolLabel $off>生成刀轨</ToolLabel></Tool>
            <Tool $w={53}><Slot><Verify /></Slot><ToolLabel $off>确认刀轨</ToolLabel></Tool>
            <Tool $w={53}><Slot><Machine /></Slot><ToolLabel $off>机床仿真</ToolLabel></Tool>
            <Tool $w={43}><Slot><Post /></Slot><ToolLabel $off>后处理</ToolLabel></Tool>
            <Tool $w={30}><ToolLabel $off $bare>车间</ToolLabel></Tool>
            <Push><Stack $w={20} $gap={4} $pt={8}><StripIcon /><StripIcon /></Stack></Push>
          </Tools>
          <Footer $pl={135}>工序</Footer>
        </Group>
        <Group $w={95}>
          <Tools $pl={4}>
            <Tool $w={80}>
              <Slot><Combo $w={80} $h={19} $mt={7} $fs={11.5}>5<Caret $big /></Combo></Slot>
              <ToolLabel>速度</ToolLabel>
            </Tool>
          </Tools>
          <Footer $pl={8}><Caret $ml="auto" /></Footer>
        </Group>
        <Group $w={136}>
          <Tools $pl={8}>
            <Stack $w={25} $gap={6} $pt={0}><Tip tone="w" /><Tip tone="w" /><Tip tone="w" flag={false} /></Stack>
            <Stack $w={25} $gap={6} $pt={0}><Tip tone="v" /><Tip tone="v" /><Tip tone="v" flag={false} /></Stack>
            <Tool $w={71}><Slot><Nudge $t={6}><Ipw /></Nudge></Slot><ToolLabel>显示 3D IPW</ToolLabel><Caret $mt={4} /></Tool>
          </Tools>
          <Footer $pl={47}>工件<Caret $ml="auto" /></Footer>
        </Group>
        <Group $w={151}>
          <Rows $pl={5}>
            <IconRow><SmGray k={0} /><SmGray k={1} /><SmGray k={2} /><SmGray k={3} /><VSep /><SmGray k={4} /></IconRow>
            <IconRow><SmGray k={5} /><SmGray k={6} /><VSep /><SmGray k={7} /><SmGray k={8} /><SmGray k={9} /><SmGray k={10} /></IconRow>
          </Rows>
          <Footer $pl={14}>加工工具 - GC工具箱<Caret $ml="auto" /></Footer>
        </Group>
        <Group $w={67}>
          <Tools>
            <Tool $w={67}><Slot><Draft /></Slot><ToolLabel>拔模分析</ToolLabel><Caret $mt={4} /></Tool>
          </Tools>
          <Footer $pl={12}>分析<Caret $ml="auto" /></Footer>
        </Group>
        <Group $w={131}>
          <Tools>
            <Tool $w={55}><Slot><Nudge $t={4}><Plus /></Nudge></Slot><ToolLabel>点</ToolLabel><Caret $mt={4} /></Tool>
            <Tool $w={64}><Slot><Extract /></Slot><ToolLabel>抽取几何特征</ToolLabel><Caret $mt={4} /></Tool>
          </Tools>
          <Footer $pl={37} $pr={11}>几何体<Caret $ml="auto" /></Footer>
        </Group>
        <Group $w={150}>
          <Tools>
            <Tool $w={66}><Slot><FindFeat /></Slot><ToolLabel $off>查找特征</ToolLabel></Tool>
            <Tool $w={36}><Slot><CutFeat /></Slot><ToolLabel $off>创建特征</ToolLabel></Tool>
          </Tools>
          <Footer $pl={70}>特征</Footer>
        </Group>
      </Ribbon>

      <Toolbar>
        <TbSection $w={771}>
          <TbBtn $w={18} $ml={-1}><TreeIco kind="mach" /></TbBtn>
          <TbBtn $w={23} $ml={6} $active><TreeIco kind="geo" /></TbBtn>
          <TbBtn $w={20} $ml={3}><TreeIco kind="tool" /></TbBtn>
          <TbSep $ml={8} />
          <TbBtn $w={20} $ml={11}><TreeIco kind="p1" /></TbBtn>
          <TbBtn $w={20} $ml={3}><TreeIco kind="p2" /></TbBtn>
          <TbSep $ml={9} />
          <Combo $w={134} $h={20} $ml={12} $fs={11} $pl={2}>刀轨<Caret $big /></Combo>
          <Combo $w={134} $h={20} $ml={8} $fs={11} $pl={2}>整个装配<Caret $big /></Combo>
        </TbSection>
        <TbSection $w={667}>
          <TbBtn $w={18} $ml={-9}><Curve k={0} /></TbBtn>
          <TbBtn $w={18} $ml={9}><Curve k={1} /></TbBtn>
          <TbBtn $w={18} $ml={8}><Curve k={2} /></TbBtn>
          <TbBtn $w={18} $ml={7}><Curve k={3} /></TbBtn>
          <TbBtn $w={18} $ml={7}><Curve k={4} /></TbBtn>
          <TbBtn $w={18} $ml={6}><Curve k={5} /></TbBtn>
          <TbBtn $w={18} $ml={8}><Curve k={6} /></TbBtn>
          <TbBtn $w={18} $ml={7}><Curve k={7} /></TbBtn>
          <TbBtn $w={18} $ml={6}><Curve k={8} /></TbBtn>
          <TbSep $ml={10} />
          <TbBtn $w={18} $ml={10}><ViewIco k={0} /></TbBtn>
          <TbBtn $w={18} $ml={7}><ViewIco k={1} /></TbBtn>
          <TbBtn $w={18} $ml={6}><ViewIco k={2} /></TbBtn>
          <TbBtn $w={18} $ml={8}><ViewIco k={3} /></TbBtn>
          <TbBtn $w={18} $ml={6}><ViewIco k={4} /></TbBtn>
          <TbBtn $w={18} $ml={8}><ViewIco k={5} /></TbBtn>
          <Caret $ml="7px" />
          <TbBtn $w={18} $ml={6}><ViewIco k={6} /></TbBtn>
          <Caret $ml="5px" />
          <TbBtn $w={18} $ml={7}><ViewIco k={7} /></TbBtn>
          <Caret $ml="6px" />
          <TbBtn $w={18} $ml={5}><ViewIco k={8} /></TbBtn>
          <Caret $ml="6px" />
          <TbSep $ml={9} />
        </TbSection>
      </Toolbar>

      <Main>
        <Nav>
          <NavTitle><NavTitleText>几何</NavTitleText><MaxBtn /></NavTitle>
          <Tree />
        </Nav>
        <Gutter />
        <View>
          <TabStrip>
            <FileTab><ModelTab /><FileName>_model3.prt</FileName><PageIco /><FileClose><TabX /></FileClose></FileTab>
          </TabStrip>
          <Stage />
          <Watermark>UG<WaterCjk>爱好者论坛</WaterCjk>@q1031015514*</Watermark>
        </View>
      </Main>

      <Dialog>
        <DTitle><Gear /><DTitleText>刀轨可视化</DTitleText><CloseX /></DTitle>
        <DBody>
          <ListBox>
            {gcode.map((g, i) => <ListItem key={i} $sel={i === 6}>{g}</ListItem>)}
          </ListBox>
          <Num $mt={4} $ml={10}>1</Num>
          <Slider $mt={6}><Track /><Thumb /></Slider>
          <EndRow $mt={5}><span>1</span><span>2</span></EndRow>
          <Num $mt={9}>进给率 0.000000</Num>
          <Tabs>
            <Tab $w={56} $on>重播</Tab>
            <Tab $w={58}>3D 动态</Tab>
            <Tab $w={59} $off>2D 动态</Tab>
          </Tabs>
          <Panel>
            <Sect>显示选项</Sect>
            <FieldRow $mt={3}><FieldLabel>刀具</FieldLabel><Combo $w={51}>刀具<Caret $big /></Combo></FieldRow>
            <CheckRow $mt={3}><Check $on><CheckMark /></Check>2D 除料</CheckRow>
            <CheckRow $mt={5} $off><Check />显示上一个 IPW</CheckRow>
            <Hr $mt={4} />
            <Sect $mt={5}>运动显示</Sect>
            <FieldRow $mt={3}><FieldLabel>刀轨</FieldLabel><Combo $w={135}>全部<Caret $big /></Combo></FieldRow>
            <FieldRow $mt={2}><FieldLabel>刀具轨迹</FieldLabel><Combo $w={75}>工具提示<Caret $big /></Combo></FieldRow>
            <FieldRow $mt={2}><FieldLabel $off>运动数</FieldLabel><CountBox>10</CountBox></FieldRow>
            <CheckRow $mt={3} $off><Check />在每一层暂停</CheckRow>
            <CheckRow $mt={5} $off><Check />显示刀具接触</CheckRow>
            <Hr $mt={4} />
            <WideBtn>过切和碰撞设置</WideBtn>
          </Panel>
          <Num $mt={6}>动画速度</Num>
          <Num $mt={8} $w={303} $right>10</Num>
          <Slider $mt={5}><Track /><Thumb $end /></Slider>
          <EndRow $mt={5}><span>1</span><span>10</span></EndRow>
          <Transport>
            {[0, 1, 2, 3, 4, 5, 6].map(k => (
              <TBtn key={k} $off={k === 6} $focus={k === 4}><Media k={k} /></TBtn>
            ))}
          </Transport>
          <DFooter>
            <DBtn $primary>确定</DBtn>
            <DBtn>取消</DBtn>
          </DFooter>
        </DBody>
      </Dialog>
    </Shell>
  );
}
